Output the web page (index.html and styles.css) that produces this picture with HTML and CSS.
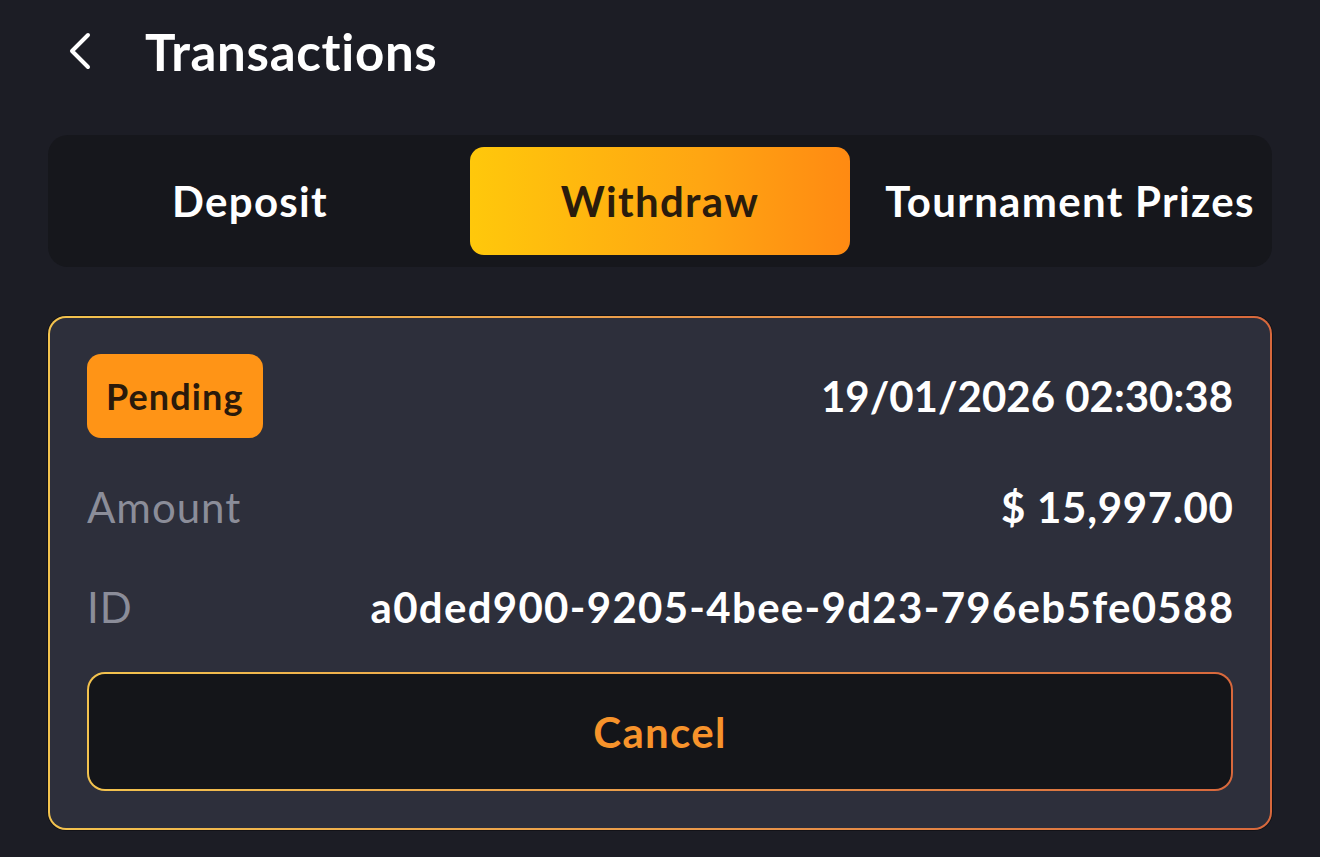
FILE: index.html
```html
<!DOCTYPE html>
<html lang="en">
<head>
<meta charset="utf-8">
<title>Transactions</title>
<link rel="stylesheet" href="styles.css">
</head>
<body>
<div class="page">
  <header class="header">
    <button class="back" aria-label="Back">
      <svg width="24" height="40" viewBox="0 0 24 40"><path d="M19 3 L3 19 L19 35" fill="none" stroke="#ffffff" stroke-width="4" stroke-linecap="round" stroke-linejoin="round"/></svg>
    </button>
    <h1 class="title">Transactions</h1>
  </header>

  <nav class="tabs">
    <div class="tab">Deposit</div>
    <div class="tab tab-active">Withdraw</div>
    <div class="tab">Tournament Prizes</div>
  </nav>

  <section class="card">
    <div class="row row-top">
      <span class="badge">Pending</span>
      <span class="value">19/01/2026 02:30:38</span>
    </div>
    <div class="row row-amount">
      <span class="label">Amount</span>
      <span class="value value-amount">$ 15,997.00</span>
    </div>
    <div class="row row-id">
      <span class="label">ID</span>
      <span class="value value-id">a0ded900-9205-4bee-9d23-796eb5fe0588</span>
    </div>
    <button class="cancel">Cancel</button>
  </section>
</div>
</body>
</html>
```
FILE: styles.css
```css
* { box-sizing: border-box; }
html, body {
  margin: 0;
  padding: 0;
  background: #1c1d25;
}
body {
  font-family: "Lato", "Noto Sans", sans-serif;
  color: #ffffff;
  width: 1320px;
  height: 857px;
  overflow: hidden;
}
.page {
  padding: 0 48px;
}
.header {
  height: 104px;
  display: flex;
  align-items: center;
  padding-left: 21px;
}
.back {
  background: none;
  border: 0;
  padding: 0;
  width: 24px;
  height: 40px;
  display: flex;
  align-items: center;
  justify-content: center;
  cursor: pointer;
}
.back svg { display: block; }
.title {
  margin: 0 0 0 52px;
  font-size: 51px;
  font-weight: 700;
  line-height: 60px;
  letter-spacing: 0.7px;
}
.tabs {
  margin-top: 31px;
  height: 132px;
  background: #16171c;
  border-radius: 20px;
  padding: 12px;
  display: grid;
  grid-template-columns: repeat(3, 1fr);
  gap: 30px;
}
.tab {
  display: flex;
  align-items: center;
  justify-content: center;
  font-size: 42px;
  font-weight: 700;
  border-radius: 14px;
  white-space: nowrap;
  letter-spacing: 1.3px;
}
.tab-active {
  background: linear-gradient(90deg, #ffc80b 0%, #ffa612 60%, #ff8a12 100%);
  color: #2a1c0c;
}
.card {
  margin-top: 49px;
  height: 514px;
  border: 2px solid transparent;
  border-radius: 18px;
  background:
    linear-gradient(#2d2f3b, #2d2f3b) padding-box,
    linear-gradient(90deg, #f3c34e 0%, #e9974a 55%, #d8683c 100%) border-box;
  box-shadow: 0 0 0 1px rgba(0,0,0,0.35);
  padding: 36px 37px 37px 37px;
  display: flex;
  flex-direction: column;
}
.row {
  display: flex;
  align-items: center;
  justify-content: space-between;
}
.row-top { height: 84px; }
.row-amount { height: 56px; margin-top: 41px; }
.row-id { height: 56px; margin-top: 44px; }
.badge {
  height: 84px;
  display: flex;
  align-items: center;
  padding: 0 19px;
  background: #ff9416;
  color: #2a1a0b;
  border-radius: 14px;
  font-size: 36px;
  font-weight: 700;
  letter-spacing: 1.1px;
}
.value {
  font-size: 42px;
  font-weight: 700;
  line-height: 56px;
  color: #ffffff;
}
.value-amount {
  letter-spacing: 0.7px;
  margin-right: -0.7px;
}
.value-id {
  letter-spacing: 1.3px;
  margin-right: -1.3px;
}
.label {
  font-size: 42px;
  font-weight: 400;
  line-height: 56px;
  color: #8b8d99;
  letter-spacing: 1px;
}
.cancel {
  margin-top: 37px;
  height: 119px;
  width: 100%;
  border: 2px solid transparent;
  border-radius: 18px;
  background:
    linear-gradient(#141519, #141519) padding-box,
    linear-gradient(90deg, #f3c34e 0%, #e9974a 55%, #d8683c 100%) border-box;
  font-family: "Lato", "Noto Sans", sans-serif;
  font-size: 42px;
  font-weight: 700;
  color: #f7932b;
  letter-spacing: 1.3px;
  cursor: pointer;
}
```
